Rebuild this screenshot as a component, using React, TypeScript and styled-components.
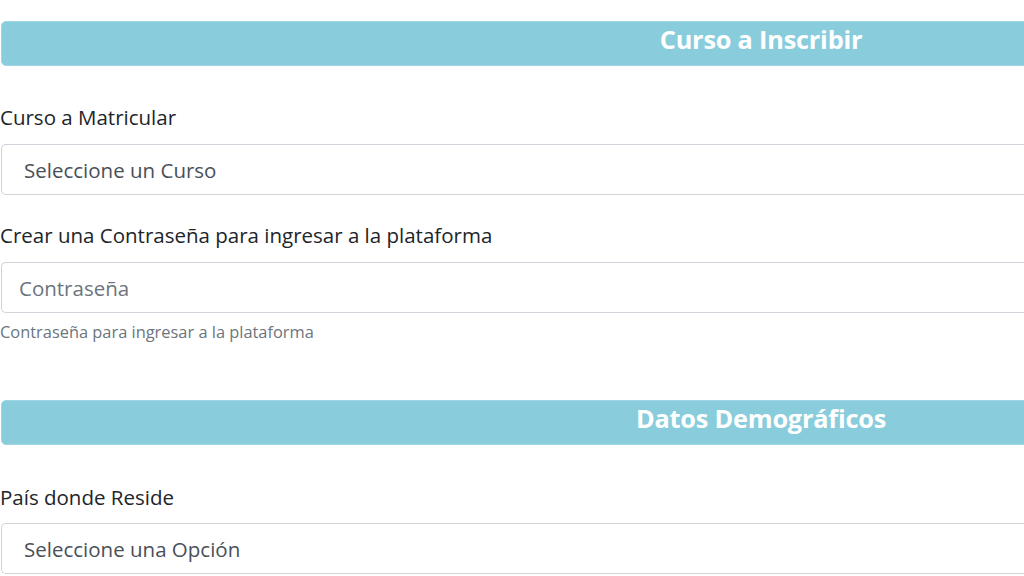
import React from "react";
import styled, { createGlobalStyle } from "styled-components";

const Global = createGlobalStyle`
  html, body { margin: 0; padding: 0; background: #fff; overflow: hidden; }
  body { font-family: "Open Sans", "Noto Sans", sans-serif; color: #212529; }
`;

const Page = styled.div`
  width: 1520px;
  padding: 21px 0 0 1px;
  display: flex;
  flex-direction: column;
`;

const SectionHeader = styled.div<{ $mt?: number }>`
  margin-top: ${(p) => p.$mt ?? 0}px;
  height: 45px;
  background: #89cddd;
  border: 1px solid #9fd6e3;
  border-radius: 5px;
  display: flex;
  align-items: center;
  justify-content: center;
  box-sizing: border-box;
  padding-bottom: 9px;
`;

const SectionTitle = styled.h4`
  margin: 0;
  color: #fff;
  font-size: 25.3px;
  line-height: 30px;
  font-weight: 700;
  letter-spacing: -0.2px;
`;

const Group = styled.div<{ $mt: number }>`
  margin-top: ${(p) => p.$mt}px;
  display: flex;
  flex-direction: column;
`;

const Label = styled.label`
  font-size: 20.5px;
  line-height: 26px;
  color: #212529;
  margin-left: -1px;
`;

const Field = styled.div<{ $mt: number; $pl: number; $muted?: boolean }>`
  margin-top: ${(p) => p.$mt}px;
  height: 51px;
  box-sizing: border-box;
  border: 1px solid #ced4da;
  border-right: none;
  border-radius: 5px 0 0 5px;
  display: flex;
  align-items: center;
  padding-left: ${(p) => p.$pl}px;
  font-size: 20.5px;
  color: ${(p) => (p.$muted ? "#6c757d" : "#495057")};
`;

const Help = styled.small`
  margin-top: 9px;
  font-size: 16.4px;
  line-height: 20px;
  color: #6c757d;
  margin-left: -1px;
`;

export default function App() {
  return (
    <>
      <Global />
      <Page>
        <SectionHeader>
          <SectionTitle>Curso a Inscribir</SectionTitle>
        </SectionHeader>
        <Group $mt={38}>
          <Label>Curso a Matricular</Label>
          <Field $mt={14} $pl={22}>Seleccione un Curso</Field>
        </Group>
        <Group $mt={27}>
          <Label>Crear una Contraseña para ingresar a la plataforma</Label>
          <Field $mt={14} $pl={17} $muted>Contraseña</Field>
          <Help>Contraseña para ingresar a la plataforma</Help>
        </Group>
        <SectionHeader $mt={58}>
          <SectionTitle>Datos Demográficos</SectionTitle>
        </SectionHeader>
        <Group $mt={39}>
          <Label>País donde Reside</Label>
          <Field $mt={13} $pl={22}>Seleccione una Opción</Field>
        </Group>
      </Page>
    </>
  );
}
